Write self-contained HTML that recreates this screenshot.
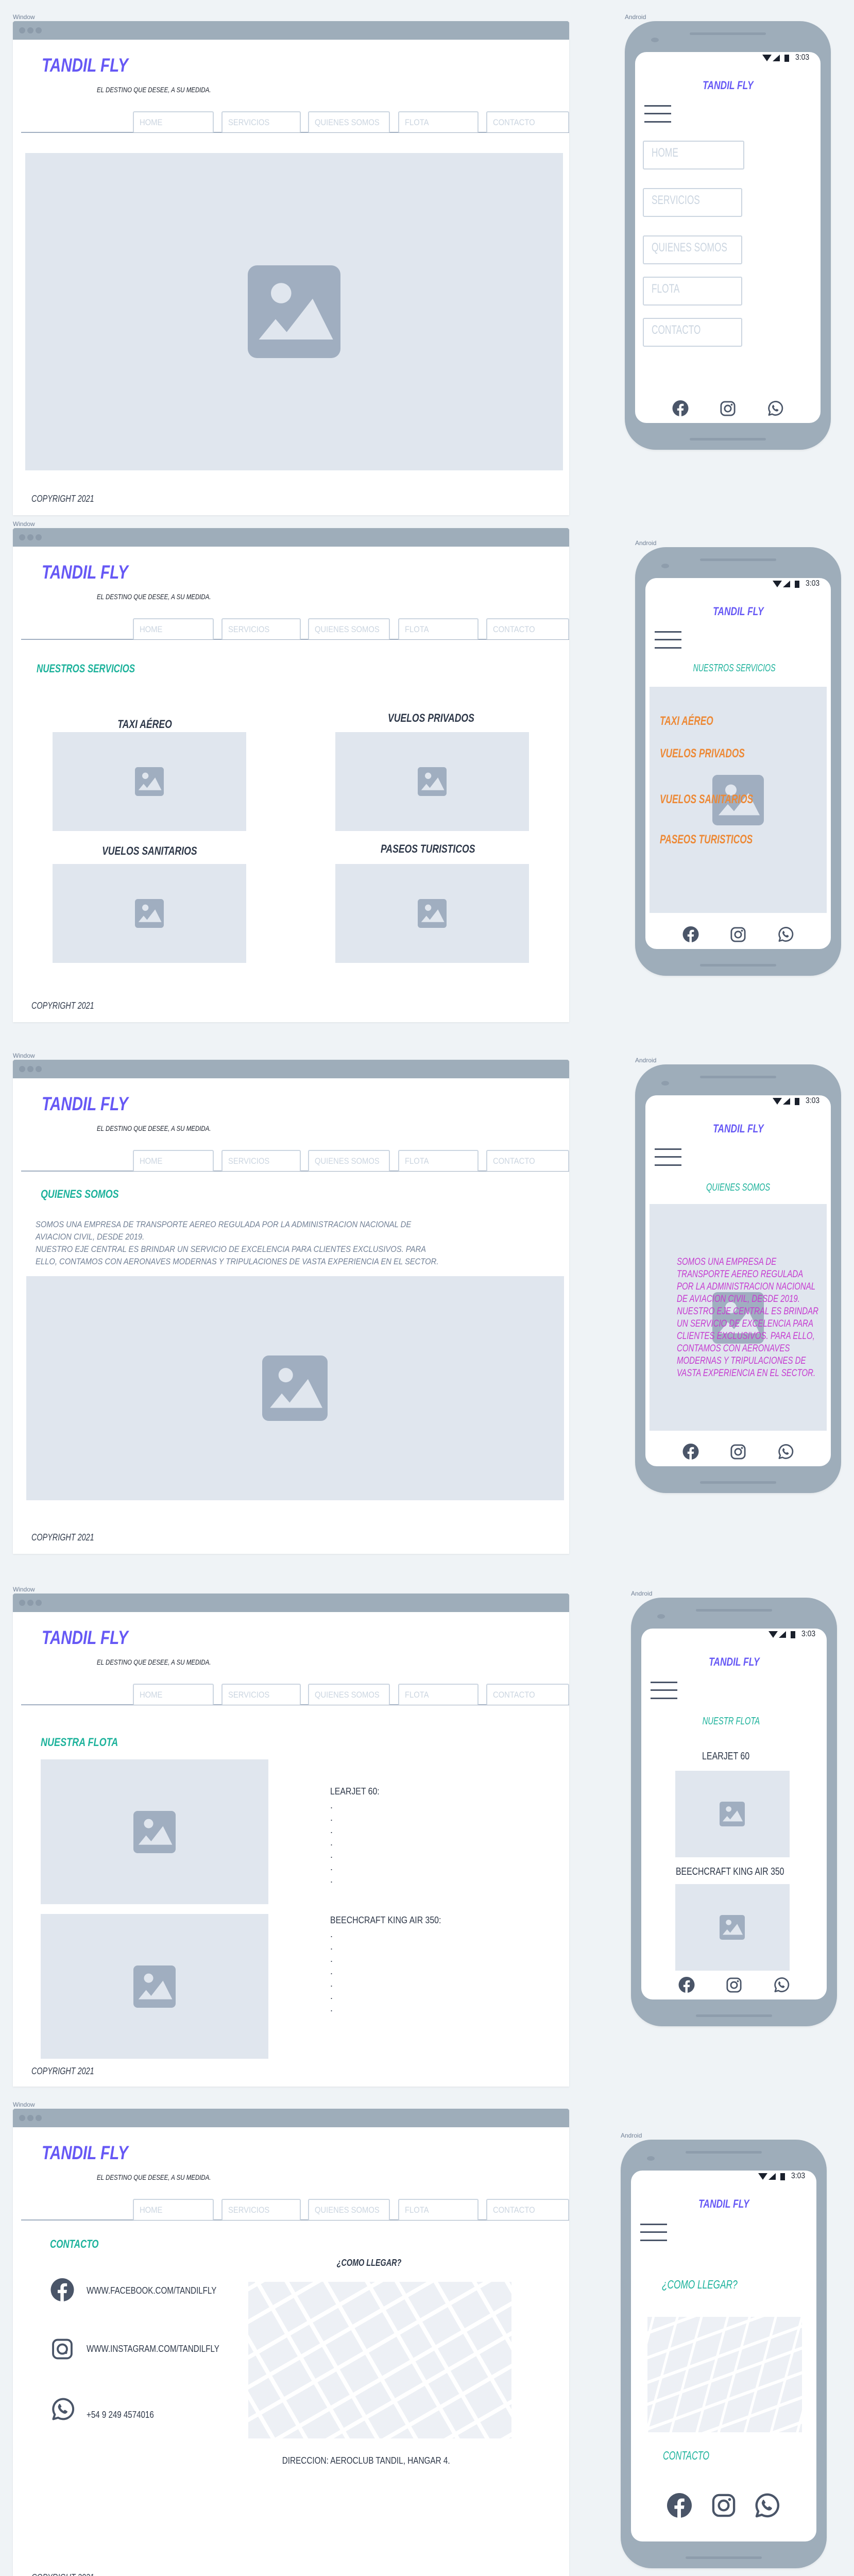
<!DOCTYPE html>
<html><head><meta charset="utf-8">
<style>
*{margin:0;padding:0;box-sizing:border-box}
html,body{width:1658px;height:5078px;overflow:hidden;background:#eff3f6;font-family:"Liberation Sans",sans-serif}
#wrap{position:relative;width:1658px;height:5078px;overflow:hidden}
.s{position:absolute;left:0;width:1658px;height:0}
.t{position:absolute;white-space:nowrap;line-height:1;font-family:"Liberation Sans",sans-serif}
.t span{display:inline-block;transform-origin:0 50%}
.c{width:600px;margin-left:-300px;text-align:center}
.c span{transform-origin:50% 50%}
.lbl{position:absolute;font-size:12px;color:#718096;line-height:1}
.win{position:absolute;left:25px;top:41px;width:1080px;background:#fff;box-shadow:0 1px 3px rgba(0,0,0,.08)}
.bar{position:absolute;left:25px;top:41px;width:1080px;height:36px;background:#9eadba;border-radius:4px 4px 0 0}
.dot{position:absolute;top:53px;width:12px;height:12px;border-radius:50%;background:#8c9baa}
.ttl{left:81px;top:108px;font-size:37px;font-weight:bold;font-style:italic;color:#6658f5}
.tag{left:188px;top:167px;font-size:14px;font-style:italic;color:#1a202c}
.nb{position:absolute;top:216px;height:41px;border:2px solid #cbd5e0;border-bottom:0;border-radius:3px 3px 0 0;font-size:17px;color:#cbd5e0;line-height:1;padding:11px 0 0 11px;white-space:nowrap;background:#fff}
.nb span{display:inline-block;transform:scaleX(.87);transform-origin:0 50%}
.hl{position:absolute;left:41px;top:256px;width:1064px;height:2px;background:#a0aec0}
.cp{left:61px;font-size:18px;font-style:italic;color:#2d3748}
.h2{font-size:22px;font-weight:bold;font-style:italic;color:#1cb29b}
.img{position:absolute;background:#e0e6ee}
.img svg{position:absolute;left:50%;top:50%}
.ph{position:absolute;width:400px;height:832px}
.body{position:absolute;left:0;top:0;width:400px;height:832px;border-radius:60px;background:#9eadba;box-shadow:0 2px 4px rgba(0,0,0,.06)}
.spk{position:absolute;left:126px;width:148px;height:5px;border-radius:3px;background:#8e9dac}
.cam{position:absolute;left:51px;top:32px;width:15px;height:9px;border-radius:50%;background:#8e9dac}
.scr{position:absolute;left:20px;top:60px;width:360px;height:720px;border-radius:22px;background:#fff}
.ham{position:absolute;left:38px;width:52px;height:3px;background:#4a5568}
.pt{font-size:22px;font-weight:bold;font-style:italic;color:#6658f5}
.pnb{position:absolute;left:35px;height:56px;border:2px solid #cbd5e0;border-radius:3px;font-size:24px;color:#cbd5e0;line-height:1;padding:10px 0 0 15px;white-space:nowrap}
.pnb span{display:inline-block;transform:scaleX(.72);transform-origin:0 50%}
.ph2{font-size:20px;font-style:italic;color:#1cb29b}
.soc{position:absolute}
.or{left:48px;font-size:24px;font-weight:bold;font-style:italic;color:#ed8936}
.mg{left:81px;font-size:19px;font-style:italic;color:#c53bd0}
.dk{font-size:18px;color:#2d3748}
</style></head><body><div id="wrap">

<!-- ============ SECTION 1 ============ -->
<div class="s" style="top:0">
<div class="lbl" style="left:25px;top:27px">Window</div>
<div class="win" style="height:959px"></div>
<div class="bar"></div><div class="dot" style="left:37px"></div><div class="dot" style="left:53px"></div><div class="dot" style="left:69px"></div>
<div class="t ttl"><span style="transform:scaleX(.8)">TANDIL FLY</span></div>
<div class="t tag"><span style="transform:scaleX(.82)">EL DESTINO QUE DESEE, A SU MEDIDA.</span></div>
<div class="hl"></div>
<div class="nb" style="left:258px;width:157px"><span>HOME</span></div>
<div class="nb" style="left:430px;width:154px"><span>SERVICIOS</span></div>
<div class="nb" style="left:598px;width:159px"><span>QUIENES SOMOS</span></div>
<div class="nb" style="left:773px;width:156px"><span>FLOTA</span></div>
<div class="nb" style="left:944px;width:161px"><span>CONTACTO</span></div>
<div class="img" style="left:49px;top:297px;width:1044px;height:616px"><svg style="margin:-90px 0 0 -90px" width="180" height="180" viewBox="0 0 100 100" preserveAspectRatio="none"><rect width="100" height="100" rx="10" fill="#a0aec0"/><circle cx="36" cy="30" r="11" fill="#e0e6ee"/><path d="M12 80L30 58L42 72L70 36L92 80Z" fill="#e0e6ee"/></svg></div>
<div class="t cp" style="top:959px"><span style="transform:scaleX(.8)">COPYRIGHT 2021</span></div>
</div>

<!-- ============ SECTION 2 ============ -->
<div class="s" style="top:984px">
<div class="lbl" style="left:25px;top:27px">Window</div>
<div class="win" style="height:959px"></div>
<div class="bar"></div><div class="dot" style="left:37px"></div><div class="dot" style="left:53px"></div><div class="dot" style="left:69px"></div>
<div class="t ttl"><span style="transform:scaleX(.8)">TANDIL FLY</span></div>
<div class="t tag"><span style="transform:scaleX(.82)">EL DESTINO QUE DESEE, A SU MEDIDA.</span></div>
<div class="hl"></div>
<div class="nb" style="left:258px;width:157px"><span>HOME</span></div>
<div class="nb" style="left:430px;width:154px"><span>SERVICIOS</span></div>
<div class="nb" style="left:598px;width:159px"><span>QUIENES SOMOS</span></div>
<div class="nb" style="left:773px;width:156px"><span>FLOTA</span></div>
<div class="nb" style="left:944px;width:161px"><span>CONTACTO</span></div>
<div class="t h2" style="left:71px;top:303px"><span style="transform:scaleX(.77)">NUESTROS SERVICIOS</span></div>
<div class="t c" style="left:281px;top:411px;font-size:22px;font-weight:bold;font-style:italic;color:#2d3748"><span style="transform:scaleX(.8)">TAXI AÉREO</span></div>
<div class="t c" style="left:837px;top:399px;font-size:22px;font-weight:bold;font-style:italic;color:#2d3748"><span style="transform:scaleX(.8)">VUELOS PRIVADOS</span></div>
<div class="t c" style="left:290px;top:657px;font-size:22px;font-weight:bold;font-style:italic;color:#2d3748"><span style="transform:scaleX(.8)">VUELOS SANITARIOS</span></div>
<div class="t c" style="left:831px;top:653px;font-size:22px;font-weight:bold;font-style:italic;color:#2d3748"><span style="transform:scaleX(.8)">PASEOS TURISTICOS</span></div>
<div class="img" style="left:102px;top:437px;width:376px;height:192px"><svg style="margin:-28px 0 0 -28px" width="56" height="56" viewBox="0 0 100 100" preserveAspectRatio="none"><rect width="100" height="100" rx="10" fill="#a0aec0"/><circle cx="36" cy="30" r="11" fill="#e0e6ee"/><path d="M12 80L30 58L42 72L70 36L92 80Z" fill="#e0e6ee"/></svg></div>
<div class="img" style="left:651px;top:437px;width:376px;height:192px"><svg style="margin:-28px 0 0 -28px" width="56" height="56" viewBox="0 0 100 100" preserveAspectRatio="none"><rect width="100" height="100" rx="10" fill="#a0aec0"/><circle cx="36" cy="30" r="11" fill="#e0e6ee"/><path d="M12 80L30 58L42 72L70 36L92 80Z" fill="#e0e6ee"/></svg></div>
<div class="img" style="left:102px;top:693px;width:376px;height:192px"><svg style="margin:-28px 0 0 -28px" width="56" height="56" viewBox="0 0 100 100" preserveAspectRatio="none"><rect width="100" height="100" rx="10" fill="#a0aec0"/><circle cx="36" cy="30" r="11" fill="#e0e6ee"/><path d="M12 80L30 58L42 72L70 36L92 80Z" fill="#e0e6ee"/></svg></div>
<div class="img" style="left:651px;top:693px;width:376px;height:192px"><svg style="margin:-28px 0 0 -28px" width="56" height="56" viewBox="0 0 100 100" preserveAspectRatio="none"><rect width="100" height="100" rx="10" fill="#a0aec0"/><circle cx="36" cy="30" r="11" fill="#e0e6ee"/><path d="M12 80L30 58L42 72L70 36L92 80Z" fill="#e0e6ee"/></svg></div>
<div class="t cp" style="top:959px"><span style="transform:scaleX(.8)">COPYRIGHT 2021</span></div>
</div>

<!-- ============ SECTION 3 ============ -->
<div class="s" style="top:2016px">
<div class="lbl" style="left:25px;top:27px">Window</div>
<div class="win" style="height:959px"></div>
<div class="bar"></div><div class="dot" style="left:37px"></div><div class="dot" style="left:53px"></div><div class="dot" style="left:69px"></div>
<div class="t ttl"><span style="transform:scaleX(.8)">TANDIL FLY</span></div>
<div class="t tag"><span style="transform:scaleX(.82)">EL DESTINO QUE DESEE, A SU MEDIDA.</span></div>
<div class="hl"></div>
<div class="nb" style="left:258px;width:157px"><span>HOME</span></div>
<div class="nb" style="left:430px;width:154px"><span>SERVICIOS</span></div>
<div class="nb" style="left:598px;width:159px"><span>QUIENES SOMOS</span></div>
<div class="nb" style="left:773px;width:156px"><span>FLOTA</span></div>
<div class="nb" style="left:944px;width:161px"><span>CONTACTO</span></div>
<div class="t h2" style="left:79px;top:291px"><span style="transform:scaleX(.81)">QUIENES SOMOS</span></div>
<div class="t" style="left:69px;top:352px;font-size:17px;font-style:italic;color:#718096"><span style="transform:scaleX(.87)">SOMOS UNA EMPRESA DE TRANSPORTE AEREO REGULADA POR LA ADMINISTRACION NACIONAL DE</span></div>
<div class="t" style="left:69px;top:376px;font-size:17px;font-style:italic;color:#718096"><span style="transform:scaleX(.87)">AVIACION CIVIL, DESDE 2019.</span></div>
<div class="t" style="left:69px;top:400px;font-size:17px;font-style:italic;color:#718096"><span style="transform:scaleX(.87)">NUESTRO EJE CENTRAL ES BRINDAR UN SERVICIO DE EXCELENCIA PARA CLIENTES EXCLUSIVOS. PARA</span></div>
<div class="t" style="left:69px;top:424px;font-size:17px;font-style:italic;color:#718096"><span style="transform:scaleX(.87)">ELLO, CONTAMOS CON AERONAVES MODERNAS Y TRIPULACIONES DE VASTA EXPERIENCIA EN EL SECTOR.</span></div>
<div class="img" style="left:51px;top:461px;width:1044px;height:435px"><svg style="margin:-64px 0 0 -64px" width="127" height="127" viewBox="0 0 100 100" preserveAspectRatio="none"><rect width="100" height="100" rx="10" fill="#a0aec0"/><circle cx="36" cy="30" r="11" fill="#e0e6ee"/><path d="M12 80L30 58L42 72L70 36L92 80Z" fill="#e0e6ee"/></svg></div>
<div class="t cp" style="top:959px"><span style="transform:scaleX(.8)">COPYRIGHT 2021</span></div>
</div>

<!-- ============ SECTION 4 ============ -->
<div class="s" style="top:3052px">
<div class="lbl" style="left:25px;top:27px">Window</div>
<div class="win" style="height:957px"></div>
<div class="bar"></div><div class="dot" style="left:37px"></div><div class="dot" style="left:53px"></div><div class="dot" style="left:69px"></div>
<div class="t ttl"><span style="transform:scaleX(.8)">TANDIL FLY</span></div>
<div class="t tag"><span style="transform:scaleX(.82)">EL DESTINO QUE DESEE, A SU MEDIDA.</span></div>
<div class="hl"></div>
<div class="nb" style="left:258px;width:157px"><span>HOME</span></div>
<div class="nb" style="left:430px;width:154px"><span>SERVICIOS</span></div>
<div class="nb" style="left:598px;width:159px"><span>QUIENES SOMOS</span></div>
<div class="nb" style="left:773px;width:156px"><span>FLOTA</span></div>
<div class="nb" style="left:944px;width:161px"><span>CONTACTO</span></div>
<div class="t h2" style="left:79px;top:319px"><span style="transform:scaleX(.82)">NUESTRA FLOTA</span></div>
<div class="img" style="left:79px;top:363px;width:442px;height:281px"><svg style="margin:-41px 0 0 -41px" width="82" height="82" viewBox="0 0 100 100" preserveAspectRatio="none"><rect width="100" height="100" rx="10" fill="#a0aec0"/><circle cx="36" cy="30" r="11" fill="#e0e6ee"/><path d="M12 80L30 58L42 72L70 36L92 80Z" fill="#e0e6ee"/></svg></div>
<div class="img" style="left:79px;top:663px;width:442px;height:281px"><svg style="margin:-41px 0 0 -41px" width="82" height="82" viewBox="0 0 100 100" preserveAspectRatio="none"><rect width="100" height="100" rx="10" fill="#a0aec0"/><circle cx="36" cy="30" r="11" fill="#e0e6ee"/><path d="M12 80L30 58L42 72L70 36L92 80Z" fill="#e0e6ee"/></svg></div>
<div class="t dk" style="left:641px;top:416px"><span style="transform:scaleX(.88)">LEARJET 60:</span></div>
<div class="t dk" style="left:641px;top:440px;line-height:24px">.<br>.<br>.<br>.<br>.<br>.<br>.</div>
<div class="t dk" style="left:641px;top:666px"><span style="transform:scaleX(.88)">BEECHCRAFT KING AIR 350:</span></div>
<div class="t dk" style="left:641px;top:690px;line-height:24px">.<br>.<br>.<br>.<br>.<br>.<br>.</div>
<div class="t cp" style="top:959px"><span style="transform:scaleX(.8)">COPYRIGHT 2021</span></div>
</div>

<!-- ============ SECTION 5 ============ -->
<div class="s" style="top:4052px">
<div class="lbl" style="left:25px;top:27px">Window</div>
<div class="win" style="height:941px"></div>
<div class="bar"></div><div class="dot" style="left:37px"></div><div class="dot" style="left:53px"></div><div class="dot" style="left:69px"></div>
<div class="t ttl"><span style="transform:scaleX(.8)">TANDIL FLY</span></div>
<div class="t tag"><span style="transform:scaleX(.82)">EL DESTINO QUE DESEE, A SU MEDIDA.</span></div>
<div class="hl"></div>
<div class="nb" style="left:258px;width:157px"><span>HOME</span></div>
<div class="nb" style="left:430px;width:154px"><span>SERVICIOS</span></div>
<div class="nb" style="left:598px;width:159px"><span>QUIENES SOMOS</span></div>
<div class="nb" style="left:773px;width:156px"><span>FLOTA</span></div>
<div class="nb" style="left:944px;width:161px"><span>CONTACTO</span></div>
<div class="t h2" style="left:97px;top:293px"><span style="transform:scaleX(.77)">CONTACTO</span></div>
<div class="t c" style="left:716px;top:331px;font-size:18px;font-weight:bold;font-style:italic;color:#2d3748"><span style="transform:scaleX(.8)">¿COMO LLEGAR?</span></div>
<svg class="soc" style="left:98px;top:370px" width="46" height="45" viewBox="0 0 32 32"><circle cx="16" cy="16" r="16" fill="#4a5568"/><path fill="#fff" d="M18 32V20.5h3.8l.6-4.4H18v-2.8c0-1.3.4-2.1 2.2-2.1h2.3V7.2c-.4-.1-1.8-.2-3.4-.2-3.4 0-5.7 2-5.7 5.8v3.3H9.6v4.4h3.8V32z"/></svg>
<svg class="soc" style="left:100px;top:487px" width="42" height="41" viewBox="0 0 32 32"><rect x="2" y="2" width="28" height="28" rx="7" fill="none" stroke="#4a5568" stroke-width="3"/><circle cx="16" cy="16" r="7" fill="none" stroke="#4a5568" stroke-width="3"/><circle cx="21.5" cy="21.5" r="2" fill="#4a5568"/></svg>
<svg class="soc" style="left:98px;top:601px" width="47" height="46" viewBox="0 0 32 32"><path d="M3.5 29.5l2-6.2A13.5 13.5 0 1 1 10 27.6z" fill="none" stroke="#4a5568" stroke-width="2.8" stroke-linejoin="round"/><path fill="#4a5568" d="M11.2 9.3c.5-.5 1.2-.4 1.5.1l1.6 2.5c.3.5.2 1.1-.2 1.4l-1 .8c.9 2 2.4 3.5 4.4 4.4l.8-1c.4-.4 1-.5 1.4-.2l2.5 1.6c.5.3.6 1 .1 1.5l-1 1.1c-.9.9-2.4 1-3.9.4-3.3-1.4-5.8-3.9-7.2-7.2-.6-1.5-.5-3 .4-3.9z"/></svg>
<div class="t dk" style="left:168px;top:385px"><span style="transform:scaleX(.84)">WWW.FACEBOOK.COM/TANDILFLY</span></div>
<div class="t dk" style="left:168px;top:498px"><span style="transform:scaleX(.84)">WWW.INSTAGRAM.COM/TANDILFLY</span></div>
<div class="t dk" style="left:168px;top:626px"><span style="transform:scaleX(.84)">+54 9 249 4574016</span></div>
<svg style="position:absolute;left:482px;top:377px" width="511" height="304" viewBox="0 0 511 304" preserveAspectRatio="none"><rect width="511" height="304" fill="#edf0f5"/><g stroke="#fff" stroke-width="8" transform="rotate(-30 255 152)"><path d="M-400 -150H900M-400 -95H900M-400 -40H900M-400 20H900M-400 70H900M-400 125H900M-400 185H900M-400 235H900M-400 290H900M-400 350H900M-400 405H900M-400 460H900"/><path d="M-250 -400V800M-185 -400V800M-120 -400V800M-60 -400V800M0 -400V800M55 -400V800M125 -400V800M175 -400V800M240 -400V800M310 -400V800M360 -400V800M425 -400V800M490 -400V800M545 -400V800M610 -400V800M680 -400V800M740 -400V800"/></g></svg>
<div class="t c dk" style="left:711px;top:715px"><span style="transform:scaleX(.85)">DIRECCION: AEROCLUB TANDIL, HANGAR 4.</span></div>
<div class="t cp" style="top:942px"><span style="transform:scaleX(.8)">COPYRIGHT 2021</span></div>
</div>

<!-- ============ PHONE 1 ============ -->
<div class="ph" style="left:1213px;top:41px">
<div class="lbl" style="left:0;top:-14px">Android</div>
<div class="body"></div><div class="spk" style="top:22px"></div><div class="cam"></div><div class="spk" style="top:809px"></div>
<div class="scr"></div>
<svg style="position:absolute;left:267px;top:65px" width="54" height="14" viewBox="0 0 54 14"><path d="M0 0H18L9 13Z" fill="#1a202c"/><path d="M20 13L34 0V13Z" fill="#1a202c"/><rect x="43" y="0" width="9" height="14" fill="#1a202c"/></svg>
<div class="t" style="left:331px;top:63px;font-size:16px;color:#1a202c"><span style="transform:scaleX(.87)">3:03</span></div>
<div class="t c pt" style="left:200px;top:114px"><span style="transform:scaleX(.79)">TANDIL FLY</span></div>
<div class="ham" style="top:163px"></div><div class="ham" style="top:178px"></div><div class="ham" style="top:194px"></div>
<div class="pnb" style="top:232px;width:197px"><span>HOME</span></div>
<div class="pnb" style="top:324px;width:193px"><span>SERVICIOS</span></div>
<div class="pnb" style="top:416px;width:193px"><span>QUIENES SOMOS</span></div>
<div class="pnb" style="top:496px;width:193px"><span>FLOTA</span></div>
<div class="pnb" style="top:576px;width:193px"><span>CONTACTO</span></div>
<svg class="soc" style="left:92px;top:736px" width="32" height="31" viewBox="0 0 32 32"><circle cx="16" cy="16" r="16" fill="#4a5568"/><path fill="#fff" d="M18 32V20.5h3.8l.6-4.4H18v-2.8c0-1.3.4-2.1 2.2-2.1h2.3V7.2c-.4-.1-1.8-.2-3.4-.2-3.4 0-5.7 2-5.7 5.8v3.3H9.6v4.4h3.8V32z"/></svg>
<svg class="soc" style="left:185px;top:737px" width="30" height="30" viewBox="0 0 32 32"><rect x="2" y="2" width="28" height="28" rx="8" fill="none" stroke="#4a5568" stroke-width="3"/><circle cx="16" cy="16" r="6.5" fill="none" stroke="#4a5568" stroke-width="3"/><circle cx="24" cy="8" r="2" fill="#4a5568"/></svg>
<svg class="soc" style="left:276px;top:736px" width="32" height="31" viewBox="0 0 32 32"><path d="M3.5 29.5l2-6.2A13.5 13.5 0 1 1 10 27.6z" fill="none" stroke="#4a5568" stroke-width="2.8" stroke-linejoin="round"/><path fill="#4a5568" d="M11.2 9.3c.5-.5 1.2-.4 1.5.1l1.6 2.5c.3.5.2 1.1-.2 1.4l-1 .8c.9 2 2.4 3.5 4.4 4.4l.8-1c.4-.4 1-.5 1.4-.2l2.5 1.6c.5.3.6 1 .1 1.5l-1 1.1c-.9.9-2.4 1-3.9.4-3.3-1.4-5.8-3.9-7.2-7.2-.6-1.5-.5-3 .4-3.9z"/></svg>
</div>

<!-- ============ PHONE 2 ============ -->
<div class="ph" style="left:1233px;top:1062px">
<div class="lbl" style="left:0;top:-14px">Android</div>
<div class="body"></div><div class="spk" style="top:22px"></div><div class="cam"></div><div class="spk" style="top:809px"></div>
<div class="scr"></div>
<svg style="position:absolute;left:267px;top:65px" width="54" height="14" viewBox="0 0 54 14"><path d="M0 0H18L9 13Z" fill="#1a202c"/><path d="M20 13L34 0V13Z" fill="#1a202c"/><rect x="43" y="0" width="9" height="14" fill="#1a202c"/></svg>
<div class="t" style="left:331px;top:63px;font-size:16px;color:#1a202c"><span style="transform:scaleX(.87)">3:03</span></div>
<div class="t c pt" style="left:200px;top:114px"><span style="transform:scaleX(.79)">TANDIL FLY</span></div>
<div class="ham" style="top:163px"></div><div class="ham" style="top:178px"></div><div class="ham" style="top:194px"></div>
<div class="t c ph2" style="left:193px;top:225px"><span style="transform:scaleX(.71)">NUESTROS SERVICIOS</span></div>
<div class="img" style="left:28px;top:271px;width:344px;height:439px"><svg style="position:absolute;left:122px;top:171px;margin:0" width="100" height="98" viewBox="0 0 100 100" preserveAspectRatio="none"><rect width="100" height="100" rx="10" fill="#a0aec0"/><circle cx="36" cy="30" r="11" fill="#e0e6ee"/><path d="M12 80L30 58L42 72L70 36L92 80Z" fill="#e0e6ee"/></svg></div>
<div class="t or" style="top:326px"><span style="transform:scaleX(.72)">TAXI AÉREO</span></div>
<div class="t or" style="top:389px"><span style="transform:scaleX(.72)">VUELOS PRIVADOS</span></div>
<div class="t or" style="top:478px"><span style="transform:scaleX(.72)">VUELOS SANITARIOS</span></div>
<div class="t or" style="top:556px"><span style="transform:scaleX(.72)">PASEOS TURISTICOS</span></div>
<svg class="soc" style="left:92px;top:736px" width="32" height="31" viewBox="0 0 32 32"><circle cx="16" cy="16" r="16" fill="#4a5568"/><path fill="#fff" d="M18 32V20.5h3.8l.6-4.4H18v-2.8c0-1.3.4-2.1 2.2-2.1h2.3V7.2c-.4-.1-1.8-.2-3.4-.2-3.4 0-5.7 2-5.7 5.8v3.3H9.6v4.4h3.8V32z"/></svg>
<svg class="soc" style="left:185px;top:737px" width="30" height="30" viewBox="0 0 32 32"><rect x="2" y="2" width="28" height="28" rx="8" fill="none" stroke="#4a5568" stroke-width="3"/><circle cx="16" cy="16" r="6.5" fill="none" stroke="#4a5568" stroke-width="3"/><circle cx="24" cy="8" r="2" fill="#4a5568"/></svg>
<svg class="soc" style="left:276px;top:736px" width="32" height="31" viewBox="0 0 32 32"><path d="M3.5 29.5l2-6.2A13.5 13.5 0 1 1 10 27.6z" fill="none" stroke="#4a5568" stroke-width="2.8" stroke-linejoin="round"/><path fill="#4a5568" d="M11.2 9.3c.5-.5 1.2-.4 1.5.1l1.6 2.5c.3.5.2 1.1-.2 1.4l-1 .8c.9 2 2.4 3.5 4.4 4.4l.8-1c.4-.4 1-.5 1.4-.2l2.5 1.6c.5.3.6 1 .1 1.5l-1 1.1c-.9.9-2.4 1-3.9.4-3.3-1.4-5.8-3.9-7.2-7.2-.6-1.5-.5-3 .4-3.9z"/></svg>
</div>

<!-- ============ PHONE 3 ============ -->
<div class="ph" style="left:1233px;top:2066px">
<div class="lbl" style="left:0;top:-14px">Android</div>
<div class="body"></div><div class="spk" style="top:22px"></div><div class="cam"></div><div class="spk" style="top:809px"></div>
<div class="scr"></div>
<svg style="position:absolute;left:267px;top:65px" width="54" height="14" viewBox="0 0 54 14"><path d="M0 0H18L9 13Z" fill="#1a202c"/><path d="M20 13L34 0V13Z" fill="#1a202c"/><rect x="43" y="0" width="9" height="14" fill="#1a202c"/></svg>
<div class="t" style="left:331px;top:63px;font-size:16px;color:#1a202c"><span style="transform:scaleX(.87)">3:03</span></div>
<div class="t c pt" style="left:200px;top:114px"><span style="transform:scaleX(.79)">TANDIL FLY</span></div>
<div class="ham" style="top:163px"></div><div class="ham" style="top:178px"></div><div class="ham" style="top:194px"></div>
<div class="t c ph2" style="left:200px;top:229px"><span style="transform:scaleX(.73)">QUIENES SOMOS</span></div>
<div class="img" style="left:28px;top:271px;width:344px;height:440px"><svg style="position:absolute;left:122px;top:171px;margin:0" width="100" height="100" viewBox="0 0 100 100" preserveAspectRatio="none"><rect width="100" height="100" rx="10" fill="#a0aec0"/><circle cx="36" cy="30" r="11" fill="#e0e6ee"/><path d="M12 80L30 58L42 72L70 36L92 80Z" fill="#e0e6ee"/></svg></div>
<div class="t mg" style="top:374px"><span style="transform:scaleX(.79)">SOMOS UNA EMPRESA DE</span></div>
<div class="t mg" style="top:398px"><span style="transform:scaleX(.79)">TRANSPORTE AEREO REGULADA</span></div>
<div class="t mg" style="top:422px"><span style="transform:scaleX(.79)">POR LA ADMINISTRACION NACIONAL</span></div>
<div class="t mg" style="top:446px"><span style="transform:scaleX(.79)">DE AVIACION CIVIL, DESDE 2019.</span></div>
<div class="t mg" style="top:470px"><span style="transform:scaleX(.79)">NUESTRO EJE CENTRAL ES BRINDAR</span></div>
<div class="t mg" style="top:494px"><span style="transform:scaleX(.79)">UN SERVICIO DE EXCELENCIA PARA</span></div>
<div class="t mg" style="top:518px"><span style="transform:scaleX(.79)">CLIENTES EXCLUSIVOS. PARA ELLO,</span></div>
<div class="t mg" style="top:542px"><span style="transform:scaleX(.79)">CONTAMOS CON AERONAVES</span></div>
<div class="t mg" style="top:566px"><span style="transform:scaleX(.79)">MODERNAS Y TRIPULACIONES DE</span></div>
<div class="t mg" style="top:590px"><span style="transform:scaleX(.79)">VASTA EXPERIENCIA EN EL SECTOR.</span></div>
<svg class="soc" style="left:92px;top:736px" width="32" height="31" viewBox="0 0 32 32"><circle cx="16" cy="16" r="16" fill="#4a5568"/><path fill="#fff" d="M18 32V20.5h3.8l.6-4.4H18v-2.8c0-1.3.4-2.1 2.2-2.1h2.3V7.2c-.4-.1-1.8-.2-3.4-.2-3.4 0-5.7 2-5.7 5.8v3.3H9.6v4.4h3.8V32z"/></svg>
<svg class="soc" style="left:185px;top:737px" width="30" height="30" viewBox="0 0 32 32"><rect x="2" y="2" width="28" height="28" rx="8" fill="none" stroke="#4a5568" stroke-width="3"/><circle cx="16" cy="16" r="6.5" fill="none" stroke="#4a5568" stroke-width="3"/><circle cx="24" cy="8" r="2" fill="#4a5568"/></svg>
<svg class="soc" style="left:276px;top:736px" width="32" height="31" viewBox="0 0 32 32"><path d="M3.5 29.5l2-6.2A13.5 13.5 0 1 1 10 27.6z" fill="none" stroke="#4a5568" stroke-width="2.8" stroke-linejoin="round"/><path fill="#4a5568" d="M11.2 9.3c.5-.5 1.2-.4 1.5.1l1.6 2.5c.3.5.2 1.1-.2 1.4l-1 .8c.9 2 2.4 3.5 4.4 4.4l.8-1c.4-.4 1-.5 1.4-.2l2.5 1.6c.5.3.6 1 .1 1.5l-1 1.1c-.9.9-2.4 1-3.9.4-3.3-1.4-5.8-3.9-7.2-7.2-.6-1.5-.5-3 .4-3.9z"/></svg>
</div>

<!-- ============ PHONE 4 ============ -->
<div class="ph" style="left:1225px;top:3101px">
<div class="lbl" style="left:0;top:-14px">Android</div>
<div class="body"></div><div class="spk" style="top:22px"></div><div class="cam"></div><div class="spk" style="top:809px"></div>
<div class="scr"></div>
<svg style="position:absolute;left:267px;top:65px" width="54" height="14" viewBox="0 0 54 14"><path d="M0 0H18L9 13Z" fill="#1a202c"/><path d="M20 13L34 0V13Z" fill="#1a202c"/><rect x="43" y="0" width="9" height="14" fill="#1a202c"/></svg>
<div class="t" style="left:331px;top:63px;font-size:16px;color:#1a202c"><span style="transform:scaleX(.87)">3:03</span></div>
<div class="t c pt" style="left:200px;top:114px"><span style="transform:scaleX(.79)">TANDIL FLY</span></div>
<div class="ham" style="top:163px"></div><div class="ham" style="top:178px"></div><div class="ham" style="top:194px"></div>
<div class="t c ph2" style="left:194px;top:230px"><span style="transform:scaleX(.74)">NUESTR FLOTA</span></div>
<div class="t" style="left:138px;top:298px;font-size:20px;color:#2d3748"><span style="transform:scaleX(.8)">LEARJET 60</span></div>
<div class="img" style="left:86px;top:336px;width:222px;height:168px"><svg style="margin:-24px 0 0 -25px" width="49" height="48" viewBox="0 0 100 100" preserveAspectRatio="none"><rect width="100" height="100" rx="10" fill="#a0aec0"/><circle cx="36" cy="30" r="11" fill="#e0e6ee"/><path d="M12 80L30 58L42 72L70 36L92 80Z" fill="#e0e6ee"/></svg></div>
<div class="t" style="left:87px;top:522px;font-size:20px;color:#2d3748"><span style="transform:scaleX(.79)">BEECHCRAFT KING AIR 350</span></div>
<div class="img" style="left:86px;top:556px;width:222px;height:168px"><svg style="margin:-24px 0 0 -25px" width="49" height="48" viewBox="0 0 100 100" preserveAspectRatio="none"><rect width="100" height="100" rx="10" fill="#a0aec0"/><circle cx="36" cy="30" r="11" fill="#e0e6ee"/><path d="M12 80L30 58L42 72L70 36L92 80Z" fill="#e0e6ee"/></svg></div>
<svg class="soc" style="left:92px;top:736px" width="32" height="31" viewBox="0 0 32 32"><circle cx="16" cy="16" r="16" fill="#4a5568"/><path fill="#fff" d="M18 32V20.5h3.8l.6-4.4H18v-2.8c0-1.3.4-2.1 2.2-2.1h2.3V7.2c-.4-.1-1.8-.2-3.4-.2-3.4 0-5.7 2-5.7 5.8v3.3H9.6v4.4h3.8V32z"/></svg>
<svg class="soc" style="left:185px;top:737px" width="30" height="30" viewBox="0 0 32 32"><rect x="2" y="2" width="28" height="28" rx="8" fill="none" stroke="#4a5568" stroke-width="3"/><circle cx="16" cy="16" r="6.5" fill="none" stroke="#4a5568" stroke-width="3"/><circle cx="24" cy="8" r="2" fill="#4a5568"/></svg>
<svg class="soc" style="left:276px;top:736px" width="32" height="31" viewBox="0 0 32 32"><path d="M3.5 29.5l2-6.2A13.5 13.5 0 1 1 10 27.6z" fill="none" stroke="#4a5568" stroke-width="2.8" stroke-linejoin="round"/><path fill="#4a5568" d="M11.2 9.3c.5-.5 1.2-.4 1.5.1l1.6 2.5c.3.5.2 1.1-.2 1.4l-1 .8c.9 2 2.4 3.5 4.4 4.4l.8-1c.4-.4 1-.5 1.4-.2l2.5 1.6c.5.3.6 1 .1 1.5l-1 1.1c-.9.9-2.4 1-3.9.4-3.3-1.4-5.8-3.9-7.2-7.2-.6-1.5-.5-3 .4-3.9z"/></svg>
</div>

<!-- ============ PHONE 5 ============ -->
<div class="ph" style="left:1205px;top:4153px">
<div class="lbl" style="left:0;top:-14px">Android</div>
<div class="body"></div><div class="spk" style="top:22px"></div><div class="cam"></div><div class="spk" style="top:809px"></div>
<div class="scr"></div>
<svg style="position:absolute;left:267px;top:65px" width="54" height="14" viewBox="0 0 54 14"><path d="M0 0H18L9 13Z" fill="#1a202c"/><path d="M20 13L34 0V13Z" fill="#1a202c"/><rect x="43" y="0" width="9" height="14" fill="#1a202c"/></svg>
<div class="t" style="left:331px;top:63px;font-size:16px;color:#1a202c"><span style="transform:scaleX(.87)">3:03</span></div>
<div class="t c pt" style="left:200px;top:114px"><span style="transform:scaleX(.79)">TANDIL FLY</span></div>
<div class="ham" style="top:163px"></div><div class="ham" style="top:178px"></div><div class="ham" style="top:194px"></div>
<div class="t" style="left:80px;top:270px;font-size:23px;font-style:italic;color:#1cb29b"><span style="transform:scaleX(.75)">¿COMO LLEGAR?</span></div>
<svg style="position:absolute;left:52px;top:344px" width="300" height="224" viewBox="0 0 300 224" preserveAspectRatio="none"><rect width="300" height="224" fill="#edf0f5"/><g stroke="#fff" stroke-width="6" transform="rotate(-20 150 112)"><path d="M-300 -60H600M-300 -15H600M-300 30H600M-300 75H600M-300 115H600M-300 160H600M-300 205H600M-300 250H600M-300 295H600"/><g transform="skewX(-35)"><path d="M-200 -300V600M-140 -300V600M-80 -300V600M-30 -300V600M30 -300V600M85 -300V600M140 -300V600M200 -300V600M250 -300V600M310 -300V600M370 -300V600M430 -300V600M490 -300V600"/></g></g></svg>
<div class="t" style="left:82px;top:602px;font-size:23px;font-style:italic;color:#1cb29b"><span style="transform:scaleX(.71)">CONTACTO</span></div>
<svg class="soc" style="left:90px;top:686px" width="48" height="48" viewBox="0 0 32 32"><circle cx="16" cy="16" r="16" fill="#4a5568"/><path fill="#fff" d="M18 32V20.5h3.8l.6-4.4H18v-2.8c0-1.3.4-2.1 2.2-2.1h2.3V7.2c-.4-.1-1.8-.2-3.4-.2-3.4 0-5.7 2-5.7 5.8v3.3H9.6v4.4h3.8V32z"/></svg>
<svg class="soc" style="left:177px;top:687px" width="46" height="46" viewBox="0 0 32 32"><rect x="2" y="2" width="28" height="28" rx="8" fill="none" stroke="#4a5568" stroke-width="3"/><circle cx="16" cy="16" r="6.5" fill="none" stroke="#4a5568" stroke-width="3"/><circle cx="24" cy="8" r="2" fill="#4a5568"/></svg>
<svg class="soc" style="left:258px;top:685px" width="51" height="50" viewBox="0 0 32 32"><path d="M3.5 29.5l2-6.2A13.5 13.5 0 1 1 10 27.6z" fill="none" stroke="#4a5568" stroke-width="2.8" stroke-linejoin="round"/><path fill="#4a5568" d="M11.2 9.3c.5-.5 1.2-.4 1.5.1l1.6 2.5c.3.5.2 1.1-.2 1.4l-1 .8c.9 2 2.4 3.5 4.4 4.4l.8-1c.4-.4 1-.5 1.4-.2l2.5 1.6c.5.3.6 1 .1 1.5l-1 1.1c-.9.9-2.4 1-3.9.4-3.3-1.4-5.8-3.9-7.2-7.2-.6-1.5-.5-3 .4-3.9z"/></svg>
</div>

</div></body></html>
